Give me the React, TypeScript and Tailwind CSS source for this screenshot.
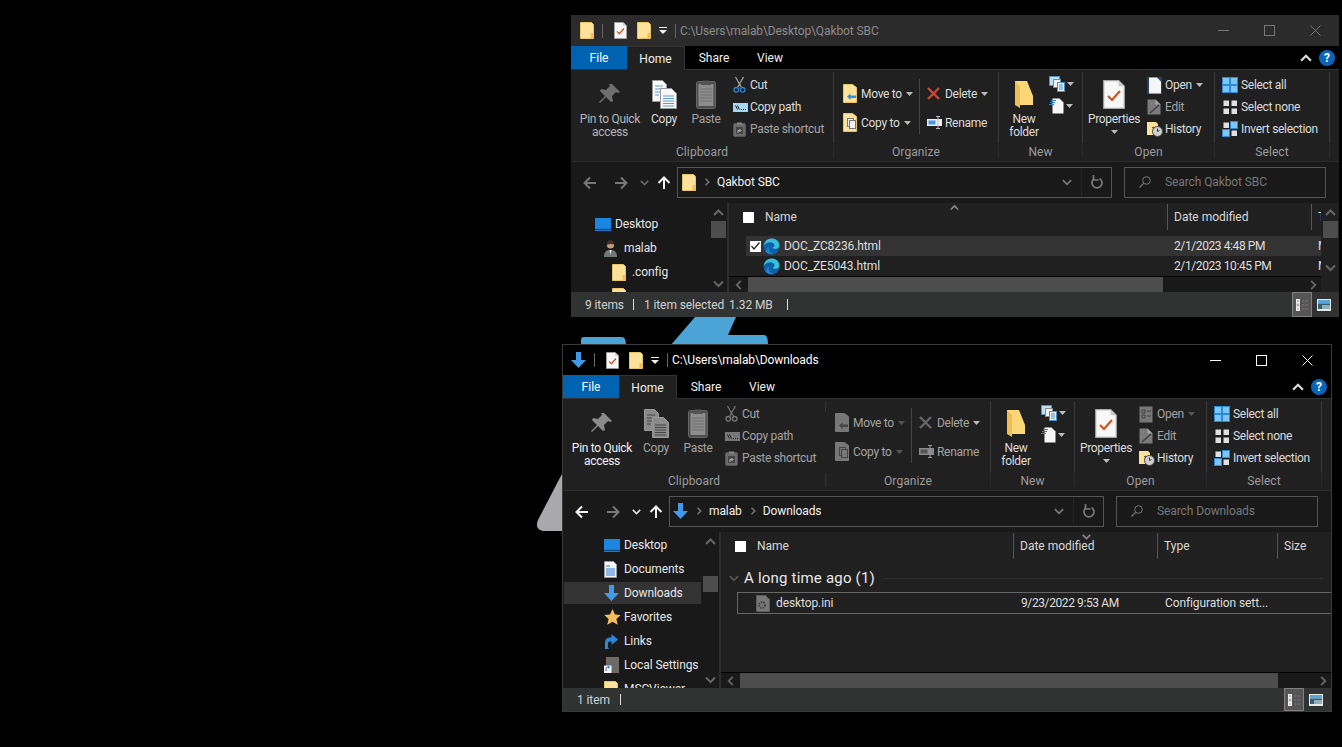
import type { ReactNode } from "react";

type IconProps = { dim?: boolean };

const Folder = ({ w = 14, h = 17 }: { w?: number; h?: number }) => (
  <svg width={w} height={h} viewBox="0 0 14 17" className="shrink-0">
    <path d="M.5.500h11l2 2v14H.5z" fill="#fce29a" stroke="#e9c468" />
    <path d="M10.500 11h3v5.500h-3z" fill="#f3bf52" />
  </svg>
);

const CheckDoc = ({ w = 13, h = 17 }: { w?: number; h?: number }) => (
  <svg width={w} height={h} viewBox="0 0 22 29" className="shrink-0">
    <path d="M.7.700h15l5.600 5.600v22H.7z" fill="#f7f7f7" stroke="#a8a8a8" strokeWidth="1.200" />
    <path d="M15.700.7v5.600h5.600z" fill="#c9c9c9" />
    <path d="M5 16l4 4 8-9" fill="none" stroke="#c8571d" strokeWidth="2.200" />
  </svg>
);

const DownArrow = ({ w = 15, h = 16 }: { w?: number; h?: number }) => (
  <svg width={w} height={h} viewBox="0 0 15 16" className="shrink-0">
    <path d="M5 0h5v8h5l-7.500 8L0 8h5z" fill="#3f9bea" />
  </svg>
);

const Edge = () => (
  <svg width="17" height="17" viewBox="0 0 17 17" className="shrink-0">
    <circle cx="8.500" cy="8.500" r="8" fill="#0f5fa8" />
    <path d="M.6 8C1.200 3.500 4.500.5 8.800.5c4.300 0 7.700 3 7.700 6.800 0 2.200-1.900 3.600-4 3.600-1.300 0-2.500-.5-3-1.200 1.300-.4 2-1.300 2-2.400 0-1.800-2-3.100-4.300-3.100C4.500 4.200 2 5.700.6 8z" fill="#35bfd8" />
    <path d="M6 8.500c-1 3 .8 6.500 4.500 7.500-3 .8-6-.3-7.700-2.500C3.500 11 4.500 9.500 6 8.500z" fill="#1b86d0" />
  </svg>
);

const Pin = ({ dim }: IconProps) => (
  <svg width="24" height="24" viewBox="0 0 24 24" className="shrink-0">
    <path d="M14 2l8 8-2 1-2-1-4 4 1 5-2 1-5-5-6 6-1-1 6-6-5-5 1-2 5 1 4-4-1-2z" fill={dim ? "#6f6f6f" : "#8a8a8a"} />
  </svg>
);

const CopyBig = ({ dim }: IconProps) => {
  const paper = dim ? "#8a8a8a" : "#f8f8f8";
  const line = dim ? "#444" : "#5a9bd5";
  return (
    <svg width="25" height="29" viewBox="0 0 25 29" className="shrink-0">
      <path d="M.5.500h10l4 4v17H.5z" fill={paper} stroke="#999" />
      <path d="M3 6h8M3 9h8M3 12h8M3 15h4" stroke={line} />
      <path d="M8.500 8.500h11l5 5v15h-16z" fill={paper} stroke="#999" />
      <path d="M11 16h11M11 18.500h11M11 21h11M11 23.500h11M11 26h11" stroke={line} />
    </svg>
  );
};

const Clipboard = () => (
  <svg width="20" height="30" viewBox="0 0 20 30" className="shrink-0">
    <rect x=".5" y="2.500" width="19" height="27" rx="2" fill="#4d4d4d" stroke="#666" />
    <rect x="2.500" y="5" width="15" height="22" fill="#8c8c8c" />
    <path d="M4 10h12M4 13h12M4 16h12M4 19h12M4 22h12" stroke="#707070" />
    <path d="M7 4V1.500h6V4h2v2H5V4z" fill="#555" />
  </svg>
);

const Scissors = ({ dim }: IconProps) => (
  <svg width="13" height="16" viewBox="0 0 13 16" className="shrink-0">
    <path d="M2.500 0l6 10.500M10.500 0l-6 10.500" stroke={dim ? "#777" : "#aaa"} strokeWidth="1.200" fill="none" />
    <circle cx="3.300" cy="12.800" r="2.300" fill="none" stroke={dim ? "#777" : "#2b7fd4"} strokeWidth="1.300" />
    <circle cx="9.700" cy="12.800" r="2.300" fill="none" stroke={dim ? "#777" : "#2b7fd4"} strokeWidth="1.300" />
  </svg>
);

const CopyPath = ({ dim }: IconProps) => (
  <svg width="15" height="9" viewBox="0 0 15 9" className="shrink-0">
    <rect width="15" height="9" fill={dim ? "#777" : "#a5d6f2"} />
    <path d="M2.500 2.500l2 4M4.500 2.500l2 4" stroke="#222" />
    <path d="M8 6.500h1M10 6.500h1M12 6.500h1" stroke="#222" />
  </svg>
);

const PasteShortcut = () => (
  <svg width="13" height="15" viewBox="0 0 13 15" className="shrink-0">
    <rect x=".5" y="1.500" width="12" height="13" rx="1.500" fill="#6c6c6c" stroke="#555" />
    <path d="M4 .5h5v2H4z" fill="#888" />
    <rect x="3" y="5" width="7" height="7" fill="#444" />
    <path d="M5 11V8.500h2.500M6.500 7l1.500 1.500L6.500 10" stroke="#bbb" fill="none" />
  </svg>
);

const FolderAction = ({ kind, dim }: { kind: "move" | "copy"; dim?: boolean }) => (
  <svg width="14" height="19" viewBox="0 0 14 19" className="shrink-0">
    <path d="M.5.500h9l4 3v15H.5z" fill={dim ? "#777" : "#fce29a"} stroke={dim ? "#777" : "#e9c468"} />
    {kind === "move" ? (
      <path d="M4 12.500l3.500-3v2H13v2.500H7.500v2z" fill={dim ? "#444" : "#2f8fe6"} />
    ) : (
      <>
        <rect x="4.500" y="5.500" width="6" height="8" fill={dim ? "#777" : "#f2f2f2"} stroke={dim ? "#444" : "#777"} />
        <rect x="6.500" y="7.500" width="6" height="8" fill={dim ? "#777" : "#f2f2f2"} stroke={dim ? "#444" : "#777"} />
      </>
    )}
  </svg>
);

const DeleteX = ({ dim }: IconProps) => (
  <svg width="13" height="13" viewBox="0 0 13 13" className="shrink-0">
    <path d="M1 1l11 11M12 1L1 12" stroke={dim ? "#666" : "#d8432a"} strokeWidth="2.400" />
  </svg>
);

const Rename = ({ dim }: IconProps) => (
  <svg width="16" height="13" viewBox="0 0 16 13" className="shrink-0">
    <rect y="3" width="15" height="7" fill={dim ? "#888" : "#eee"} />
    <rect x="1.500" y="4.500" width="7" height="4" fill={dim ? "#555" : "#3f9bea"} />
    <path d="M11 .5V12.500M9 .5h4M9 12.500h4" stroke={dim ? "#999" : "#bbb"} />
  </svg>
);

const NewFolder = () => (
  <svg width="18" height="27" viewBox="0 0 18 27" className="shrink-0">
    <path d="M0 0h12l6 15v9H5z" fill="#fbd875" />
    <path d="M0 0l5 5v22l-5-3z" fill="#efbd55" />
  </svg>
);

const NewItem = () => (
  <svg width="16" height="16" viewBox="0 0 16 16" className="shrink-0">
    <rect x=".5" y=".5" width="10" height="9" fill="#bfe0f5" stroke="#4b8fc4" />
    <rect x="4.500" y="3.500" width="7" height="8" fill="#f3f3f3" stroke="#888" />
    <rect x="8.500" y="6.500" width="7" height="9" fill="#e8f1f8" stroke="#4b8fc4" />
    <path d="M10 9h4M10 11h4M10 13h4" stroke="#4b8fc4" />
  </svg>
);

const EasyAccess = () => (
  <svg width="15" height="16" viewBox="0 0 15 16" className="shrink-0">
    <path d="M3.500.5h7l4 4v11h-11z" fill="#f7f7f7" />
    <path d="M2 2.500h5M1 4.500h5M0 6.500h5" stroke="#2b7fd4" strokeWidth="1.200" />
  </svg>
);

const OpenDoc = ({ dim }: IconProps) =>
  dim ? (
    <svg width="14" height="17" viewBox="0 0 14 17" className="shrink-0">
      <path d="M.5.500h13v16H.5z" fill="#777" />
      <path d="M3 4h3v3H3zM3 9h3v3H3zM8 5h4M8 10h4" stroke="#444" fill="none" />
    </svg>
  ) : (
    <svg width="15" height="17" viewBox="0 0 15 17" className="shrink-0">
      <rect width="15" height="17" fill="#24406f" />
      <path d="M2 .5h8l4 4V16.500H2z" fill="#f5f5f5" />
    </svg>
  );

const EditDoc = () => (
  <svg width="14" height="16" viewBox="0 0 14 16" className="shrink-0">
    <path d="M.5.500h8l5 5v10H.5z" fill="#7b7b7b" />
    <path d="M8.500.5v5h5z" fill="#a5a5a5" />
    <path d="M3 14L12 6" stroke="#3f3f3f" strokeWidth="1.500" />
  </svg>
);

const History = () => (
  <svg width="16" height="15" viewBox="0 0 16 15" className="shrink-0">
    <path d="M0 0h9l2 2v11H0z" fill="#fce29a" />
    <circle cx="10.500" cy="9.500" r="5" fill="#d0d0d0" stroke="#444" />
    <path d="M10.500 6.500v3l2-1M7 5l-2 1" stroke="#333" fill="none" />
  </svg>
);

const SelectIcon = ({ kind }: { kind: "all" | "none" | "invert" }) => {
  const blue = (x: number, y: number) => (
    <rect x={x + 0.5} y={y + 0.5} width="7" height="7" fill="#7cc5f4" stroke="#2b8ad6" />
  );
  const grey = (x: number, y: number) => <rect x={x + 1.5} y={y + 1.5} width="5.500" height="5.500" fill="#e0e0e0" />;
  const map = {
    all: [blue(0, 0), blue(8, 0), blue(0, 8), blue(8, 8)],
    none: [grey(0, 0), grey(8, 0), grey(0, 8), grey(8, 8)],
    invert: [grey(0, 0), blue(8, 0), blue(0, 8), grey(8, 8)],
  };
  return (
    <svg width="16" height="16" viewBox="0 0 16 16" className="shrink-0">
      {map[kind].map((node, i) => (
        <g key={i}>{node}</g>
      ))}
    </svg>
  );
};

const Caret = ({ color = "#bbb" }: { color?: string }) => (
  <svg width="7" height="4" viewBox="0 0 7 4" className="shrink-0">
    <path d="M0 0h7L3.500 4z" fill={color} />
  </svg>
);

const Chevron = ({ dir, color = "#666", size = 11 }: { dir: "up" | "down" | "left" | "right"; color?: string; size?: number }) => {
  const d = {
    up: "M1 8l4.500-4.500L10 8",
    down: "M1 3.500L5.500 8 10 3.500",
    left: "M7.500 1L3 5.500 7.500 10",
    right: "M3.500 1L8 5.500 3.500 10",
  }[dir];
  return (
    <svg width={size} height={size} viewBox="0 0 11 11" className="shrink-0">
      <path d={d} fill="none" stroke={color} strokeWidth="2" />
    </svg>
  );
};

const NavArrow = ({ dir, color }: { dir: "left" | "right" | "up"; color: string }) => {
  const d = {
    left: "M13 7H2M7 1.500L1.500 7 7 12.500",
    right: "M1 7h11M7 1.500L12.500 7 7 12.500",
    up: "M7 13V2M1.500 7L7 1.500 12.500 7",
  }[dir];
  return (
    <svg width="14" height="14" viewBox="0 0 14 14" className="shrink-0">
      <path d={d} fill="none" stroke={color} strokeWidth="2" />
    </svg>
  );
};

const Refresh = () => (
  <svg width="12" height="14" viewBox="0 0 12 14" className="shrink-0">
    <path d="M8.500 3.500A5 5 0 1 1 3 3.800" fill="none" stroke="#777" strokeWidth="1.700" />
    <path d="M2.500 0v5h5" fill="none" stroke="#777" strokeWidth="1.700" />
  </svg>
);

const SearchGlass = () => (
  <svg width="12" height="12" viewBox="0 0 12 12" className="shrink-0">
    <circle cx="7.500" cy="4.500" r="3.800" fill="none" stroke="#777" />
    <path d="M4.800 7.200L.5 11.500" stroke="#777" strokeWidth="1.200" />
  </svg>
);

const DesktopIcon = () => (
  <svg width="16" height="13" viewBox="0 0 16 13" className="shrink-0">
    <rect width="16" height="13" fill="#1b86e0" />
    <path d="M0 11.500h16" stroke="#0d4d8a" strokeWidth="1.500" />
  </svg>
);

const UserIcon = () => (
  <svg width="13" height="17" viewBox="0 0 13 17" className="shrink-0">
    <path d="M0 17c0-5 2-7 6.500-7S13 12 13 17z" fill="#6e7a7a" />
    <path d="M5.500 10l1 5 1-5z" fill="#eee" />
    <circle cx="6.500" cy="5" r="3.600" fill="#c59a7e" />
    <path d="M2.800 5C2.500 1.500 4.500 0 6.500 0s4 1.500 3.700 4.500C8.500 4 6 3.500 2.800 5z" fill="#3a3028" />
  </svg>
);

const DocumentsIcon = () => (
  <svg width="13" height="17" viewBox="0 0 13 17" className="shrink-0">
    <path d="M.5.500h9l3 3v13H.5z" fill="#f5f5f5" stroke="#999" />
    <path d="M2 5h4M2 8h9M2 10h9M2 12h9M2 14h9" stroke="#2b7fd4" />
  </svg>
);

const Star = () => (
  <svg width="17" height="16" viewBox="0 0 17 16" className="shrink-0">
    <path d="M8.500 0l2.500 5.500 5.700.6-4.300 3.900 1.300 5.800-5.200-3-5.200 3L4.600 10 .3 6.100 6 5.500z" fill="#f5be5e" />
  </svg>
);

const LinksIcon = () => (
  <svg width="14" height="16" viewBox="0 0 14 16" className="shrink-0">
    <path d="M1 16V9c0-3 2-4.500 5-4.500h1.500V1L14 6.500 7.500 12V8.500H6C4 8.500 4 10 4 12c0 2 0 3 1 4z" fill="#2b86dc" />
  </svg>
);

const LocalSettings = () => (
  <svg width="15" height="16" viewBox="0 0 15 16" className="shrink-0">
    <rect x="2" width="13" height="16" fill="#77685d" />
    <rect x="4" y="1.500" width="9" height="13" fill="#6a6a6a" />
    <rect y="8.500" width="7.500" height="7.500" fill="#f3f3f3" />
    <path d="M2 14v-2.500c0-1 1-1.500 2-1.500h1M3.800 8.800L5.500 10 3.800 11.500" stroke="#1d6fc0" fill="none" />
  </svg>
);

const IniFile = () => (
  <svg width="14" height="17" viewBox="0 0 14 17" className="shrink-0">
    <path d="M.5.500h9l4 4v12H.5z" fill="#777" stroke="#5c5c5c" />
    <circle cx="6" cy="10" r="3" fill="none" stroke="#444" strokeWidth="2" strokeDasharray="1.500 1" />
  </svg>
);

const DetailsIcon = () => (
  <svg width="12" height="12" viewBox="0 0 12 12">
    <path d="M0 0h4v4H0z" fill="#eee" />
    <path d="M0 4h4v4H0z" fill="#ddd" />
    <path d="M0 8h4v4H0z" fill="#eee" />
    <path d="M1.500 1.500h1v1h-1zM1.500 5.500h1v1h-1z" fill="#222" />
    <path d="M1.500 9.500h1v1h-1z" fill="#c33" />
    <path d="M6 2h2.500M9.500 2H12M6 6h2.500M9.500 6H12M6 10h2.500M9.500 10H12" stroke="#777" />
  </svg>
);

const ThumbIcon = () => (
  <svg width="14" height="12" viewBox="0 0 14 12">
    <rect width="14" height="12" fill="#e8e8e8" />
    <rect x="1" y="1" width="12" height="3.500" fill="#5aa4dc" />
    <rect x="1" y="4.500" width="12" height="5.500" fill="#39606f" />
    <path d="M5 6h8v4H5z" fill="#8fb0b8" />
  </svg>
);

const Dropdown = ({ dim }: IconProps) => (
  <svg width="8" height="7" viewBox="0 0 8 7" className="shrink-0">
    <path d="M0 .5h8" stroke={dim ? "#ccc" : "#eee"} />
    <path d="M0 3h8L4 7z" fill={dim ? "#ccc" : "#eee"} />
  </svg>
);

const SmallRow = ({ icon, label, width, dim, caret, caretColor }: {
  icon: ReactNode;
  label: string;
  width: string;
  dim?: boolean;
  caret?: boolean;
  caretColor?: string;
}) => (
  <div className="flex items-center">
    <div className={`flex shrink-0 items-center ${width}`}>{icon}</div>
    <span className={`whitespace-nowrap ${dim ? "text-[#a3a3a3]" : "text-[#dcdcdc]"}`}>{label}</span>
    {caret && (
      <span className="ml-[4px]">
        <Caret color={caretColor} />
      </span>
    )}
  </div>
);

const BigButton = ({ icon, width, margin, lines, tone, caret }: {
  icon: ReactNode;
  width: string;
  margin?: string;
  lines: string[];
  tone: string;
  caret?: boolean;
}) => (
  <div className={`flex shrink-0 flex-col items-center pt-2 ${width} ${margin ?? ""}`}>
    <div className="flex h-8 items-center justify-center">{icon}</div>
    <div className={`mt-[3px] text-center leading-[13px] whitespace-nowrap ${tone}`}>
      {lines.map((line) => (
        <div key={line}>{line}</div>
      ))}
    </div>
    {caret && (
      <div className="mt-[4px]">
        <Caret />
      </div>
    )}
  </div>
);

const Group = ({ width, label, broken, children }: { width: string; label: string; broken?: boolean; children: ReactNode }) => (
  <div className={`flex h-full shrink-0 ${width}`}>
    <div className="flex min-w-0 flex-1 flex-col">
      <div className="flex flex-1">{children}</div>
      <div className="flex h-[21px] items-center justify-center pt-[3px] tracking-[0.1px] text-[#9c9c9c]">{label}</div>
    </div>
    <div className="mt-0.5 mb-[3px] flex w-px flex-col justify-between">
      {broken ? (
        <>
          <div className="h-[11px] bg-[#333]" />
          <div className="h-[14px] bg-[#333]" />
        </>
      ) : (
        <>
          <div className="h-[71px] bg-[#3b3b3b]" />
          <div className="h-[15px] bg-[#2a2a2a]" />
        </>
      )}
    </div>
  </div>
);

const Ribbon = ({ active }: { active: boolean }) => {
  const dim = active;
  return (
    <div className="flex h-[92px] shrink-0 border-b border-[#2c2c2c] bg-[#202020] tracking-[-0.3px]">
      <Group width="w-[263px]" label="Clipboard" broken={active}>
        <BigButton icon={<Pin dim={!active} />} width="w-[64px]" margin="ml-[7px]" lines={["Pin to Quick", "access"]} tone={active ? "text-[#f0f0f0]" : "text-[#b5b5b5]"} />
        <BigButton icon={<CopyBig dim={dim} />} width="w-[44px]" lines={["Copy"]} tone={dim ? "text-[#a3a3a3]" : "text-[#dcdcdc]"} />
        <BigButton icon={<Clipboard />} width="w-[40px]" lines={["Paste"]} tone="text-[#a3a3a3]" />
        <div className="ml-[7px] flex flex-col pt-1 [&>*]:h-[22px]">
          <SmallRow icon={<Scissors dim={dim} />} label="Cut" width="w-[17px]" dim={dim} />
          <SmallRow icon={<CopyPath dim={dim} />} label="Copy path" width="w-[17px]" dim={dim} />
          <SmallRow icon={<PasteShortcut />} label="Paste shortcut" width="w-[17px]" dim />
        </div>
      </Group>
      <Group width="w-[165px]" label="Organize">
        <div className="ml-[9px] flex w-[76px] flex-col pt-[9px] [&>*]:h-[29px]">
          <SmallRow icon={<FolderAction kind="move" dim={dim} />} label="Move to" width="w-[18px]" dim={dim} caret caretColor={dim ? "#555" : "#bbb"} />
          <SmallRow icon={<FolderAction kind="copy" dim={dim} />} label="Copy to" width="w-[18px]" dim={dim} caret caretColor={dim ? "#555" : "#bbb"} />
        </div>
        <div className="mt-[9px] h-[55px] w-px bg-[#444]" />
        <div className="ml-[7px] flex flex-col pt-[9px] [&>*]:h-[29px]">
          <SmallRow icon={<DeleteX dim={dim} />} label="Delete" width="w-[18px]" dim={dim} caret />
          <SmallRow icon={<Rename dim={dim} />} label="Rename" width="w-[18px]" dim={dim} />
        </div>
      </Group>
      <Group width="w-[84px]" label="New">
        <BigButton icon={<NewFolder />} width="w-[46px]" margin="ml-[2px]" lines={["New", "folder"]} tone="text-[#dcdcdc]" />
        <div className="ml-[2px] flex flex-col pt-[3px] [&>*]:h-[22px]">
          <div className="flex items-center gap-[2px]">
            <NewItem />
            <Caret />
          </div>
          <div className="flex items-center gap-[2px]">
            <EasyAccess />
            <Caret />
          </div>
        </div>
      </Group>
      <Group width="w-[132px]" label="Open">
        <BigButton icon={<CheckDoc w={22} h={29} />} width="w-[60px]" margin="ml-px" lines={["Properties"]} tone="text-[#dcdcdc]" caret />
        <div className="ml-[3px] flex flex-col pt-1 [&>*]:h-[22px]">
          <SmallRow icon={<OpenDoc dim={dim} />} label="Open" width="w-[18px]" dim={dim} caret caretColor={dim ? "#555" : "#bbb"} />
          <SmallRow icon={<EditDoc />} label="Edit" width="w-[18px]" dim />
          <SmallRow icon={<History />} label="History" width="w-[18px]" />
        </div>
      </Group>
      <Group width="w-[115px]" label="Select">
        <div className="ml-[7px] flex flex-col pt-1 [&>*]:h-[22px]">
          <SmallRow icon={<SelectIcon kind="all" />} label="Select all" width="w-[19px]" />
          <SmallRow icon={<SelectIcon kind="none" />} label="Select none" width="w-[19px]" />
          <SmallRow icon={<SelectIcon kind="invert" />} label="Invert selection" width="w-[19px]" />
        </div>
      </Group>
    </div>
  );
};

const TitleSep = () => <div className="h-[14px] w-px bg-[#666]" />;

const TitleBar = ({ active, path, height }: { active: boolean; path: string; height: string }) => {
  const control = active ? "#fff" : "#777";
  return (
    <div className={`flex shrink-0 items-center ${height} ${active ? "bg-black" : "bg-[#2b2b2b]"}`}>
      <div className="flex w-[31px] justify-end pr-[8px]">
        {active ? <DownArrow /> : <Folder />}
      </div>
      <TitleSep />
      <div className="ml-[11px]">
        <CheckDoc />
      </div>
      <div className="ml-[10px]">
        <Folder />
      </div>
      <div className="ml-2">
        <Dropdown />
      </div>
      <div className="ml-2">
        <TitleSep />
      </div>
      <div className={`ml-[4px] whitespace-nowrap ${active ? "text-white" : "text-[#8c8c8c]"}`}>{path}</div>
      <div className="ml-auto flex items-center pr-[18px]">
        <svg width="11" height="1" viewBox="0 0 11 1" className="mr-[35px]">
          <rect width="11" height="1" fill={control} />
        </svg>
        <svg width="11" height="11" viewBox="0 0 11 11" className="mr-[35px]">
          <rect x=".5" y=".5" width="10" height="10" fill="none" stroke={control} />
        </svg>
        <svg width="11" height="11" viewBox="0 0 11 11">
          <path d="M.5.500l10 10M10.500.5l-10 10" stroke={control} />
        </svg>
      </div>
    </div>
  );
};

const Tabs = () => (
  <div className="flex h-6 shrink-0 items-stretch border-b border-[#333] bg-black tracking-normal text-[#f0f0f0]">
    <div className="flex w-[56px] items-center justify-center bg-[#0063b1] text-white">File</div>
    <div className="-mb-px flex w-[58px] items-center justify-center border-t border-r border-[#333] bg-[#202020]">Home</div>
    <div className="flex w-[58px] items-center justify-center">Share</div>
    <div className="flex w-[54px] items-center justify-center">View</div>
    <div className="ml-auto flex items-center pr-[4px]">
      <Chevron dir="up" color="#ddd" size={12} />
      <div className="ml-[7px] flex h-[16px] w-[16px] items-center justify-center rounded-full bg-[#0a64b8] text-[12px] leading-none font-bold text-white">?</div>
    </div>
  </div>
);

const NavBar = ({ active, crumbs, search }: { active: boolean; crumbs: string[]; search: string }) => (
  <div className="h-[41px] shrink-0 bg-[#191919] pt-[5px] pr-[13px] pl-[12px]">
    <div className="flex h-[31px] items-center">
      <NavArrow dir="left" color={active ? "#f2f2f2" : "#777"} />
      <div className="ml-[17px]">
        <NavArrow dir="right" color="#777" />
      </div>
      <div className="ml-[12px]">
        <Chevron dir="down" color={active ? "#ddd" : "#666"} size={9} />
      </div>
      <div className="ml-[8px]">
        <NavArrow dir="up" color="#f2f2f2" />
      </div>
      <div className={`ml-[6px] flex h-full w-[435px] items-center border border-[#555] pb-px ${active ? "pl-[3px]" : "pl-[4px]"}`}>
        {active ? <DownArrow /> : <Folder />}
        {crumbs.map((crumb) => (
          <div key={crumb} className="flex items-center">
            <span className="mr-[6px] ml-[7px]">
              <Chevron dir="right" color="#777" size={8} />
            </span>
            <span className="whitespace-nowrap text-[#f0f0f0]">{crumb}</span>
          </div>
        ))}
        <div className="ml-auto flex h-full items-center">
          <Chevron dir="down" color="#777" size={10} />
          <div className="ml-[9px] h-full w-px bg-[#262626]" />
          <div className="flex w-[29px] justify-center">
            <Refresh />
          </div>
        </div>
      </div>
      <div className="ml-[12px] flex h-full flex-1 items-center border border-[#555] pb-px pl-[14px] text-[#777]">
        <SearchGlass />
        <span className="ml-[14px] whitespace-nowrap">{search}</span>
      </div>
    </div>
  </div>
);

type TreeItem = { icon: ReactNode; label: string; indent: string; selected?: boolean };

const Sidebar = ({ items, padTop, thumb }: { items: TreeItem[]; padTop: string; thumb: string }) => (
  <div className="flex w-[158px] shrink-0 border-r-2 border-[#2e2e2e] bg-[#191919]">
    <div className={`w-[139px] shrink-0 overflow-hidden ${padTop}`}>
      {items.map((item) => (
        <div key={item.label} className="flex h-6 items-center">
          <div className={`ml-px flex h-[22px] w-[137px] shrink-0 items-center whitespace-nowrap text-[#e6e6e6] ${item.indent} ${item.selected ? "bg-[#333]" : ""}`}>
            <div className="flex w-5 shrink-0 items-center">{item.icon}</div>
            {item.label}
          </div>
        </div>
      ))}
    </div>
    <div className="ml-px flex w-[15px] shrink-0 flex-col items-center">
      <div className="flex h-[18px] items-center">
        <Chevron dir="up" />
      </div>
      <div className={`w-[15px] bg-[#4d4d4d] ${thumb}`} />
      <div className="mt-auto flex h-[18px] items-center">
        <Chevron dir="down" />
      </div>
    </div>
  </div>
);

const HScroll = ({ thumb, width }: { thumb: string; width: string }) => (
  <div className={`flex h-4 shrink-0 items-stretch border-t border-black bg-[#191919] ${width}`}>
    <div className="flex w-[19px] items-center justify-center">
      <Chevron dir="left" size={10} />
    </div>
    <div className={`bg-[#4d4d4d] ${thumb}`} />
    <div className="ml-auto flex w-4 items-center justify-center">
      <Chevron dir="right" size={10} />
    </div>
  </div>
);

const HeaderCell = ({ label, width }: { label: string; width: string }) => (
  <div className={`my-px flex shrink-0 items-center overflow-hidden border-l border-[#555] pl-[6px] tracking-normal whitespace-nowrap text-[#d8d8d8] ${width}`}>{label}</div>
);

const StatusBar = ({ height, items }: { height: string; items: ReactNode }) => (
  <div className={`flex shrink-0 items-center bg-[#313333] pl-[14px] text-[#d0d0d0] ${height}`}>
    {items}
    <div className="mr-[8px] ml-auto flex h-full items-center">
      <div className="flex h-full w-[20px] items-center justify-center border border-[#808080] bg-[#555]">
        <DetailsIcon />
      </div>
      <div className="ml-[5px]">
        <ThumbIcon />
      </div>
    </div>
  </div>
);

const StatusSep = ({ margin }: { margin: string }) => <div className={`h-[11px] w-px bg-[#ddd] ${margin}`} />;

const QakbotContent = () => (
  <div className="flex min-h-0 flex-1">
    <Sidebar
      padTop="pt-[9px]"
      thumb="h-[17px]"
      items={[
        { icon: <DesktopIcon />, label: "Desktop", indent: "pl-[23px]" },
        { icon: <UserIcon />, label: "malab", indent: "pl-[32px]" },
        { icon: <Folder />, label: ".config", indent: "pl-[40px]" },
        { icon: <Folder />, label: "", indent: "pl-[40px]" },
      ]}
    />
    <div className="flex min-w-0 flex-1 flex-col bg-[#202020]">
      <div className="flex min-h-0 flex-1">
        <div className="relative min-w-0 flex-1 overflow-hidden">
          <div className="flex h-7 items-stretch">
            <div className="flex w-[438px] shrink-0 items-center pl-[14px] tracking-normal text-[#d8d8d8]">
              <div className="h-[11px] w-[11px] bg-white" />
              <span className="ml-[11px]">Name</span>
            </div>
            <HeaderCell label="Date modified" width="w-[144px]" />
            <HeaderCell label="T" width="w-[10px]" />
          </div>
          <div className="absolute top-0 left-[221px]">
            <Chevron dir="up" size={9} color="#888" />
          </div>
          <div className="mt-[5px] ml-[17px]">
            {[
              { name: "DOC_ZC8236.html", date: "2/1/2023 4:48 PM", on: true },
              { name: "DOC_ZE5043.html", date: "2/1/2023 10:45 PM", on: false },
            ].map((row) => (
              <div key={row.name} className={`flex h-5 items-center whitespace-nowrap text-[#dedede] ${row.on ? "bg-[#333]" : ""}`}>
                <div className="flex w-[421px] shrink-0 items-center pl-1">
                  <div className={`flex h-[11px] w-[11px] items-center justify-center ${row.on ? "bg-white" : ""}`}>
                    {row.on && (
                      <svg width="9" height="8" viewBox="0 0 9 8">
                        <path d="M.5 4l2.500 3L8.500.5" fill="none" stroke="#222" strokeWidth="1.200" />
                      </svg>
                    )}
                  </div>
                  <div className="ml-[2px]">
                    <Edge />
                  </div>
                  <span className="ml-[4px]">{row.name}</span>
                </div>
                <div className="w-[144px] shrink-0 pl-[7px] tracking-[-0.4px]">{row.date}</div>
                <div className="w-[10px] shrink-0 overflow-hidden pl-[7px]">M</div>
              </div>
            ))}
          </div>
        </div>
        <div className="flex w-[18px] shrink-0 flex-col items-center pl-px">
          <div className="flex h-[18px] items-center">
            <Chevron dir="up" />
          </div>
          <div className="h-[17px] w-[15px] bg-[#4d4d4d]" />
          <div className="mt-auto flex h-[18px] items-center">
            <Chevron dir="down" />
          </div>
        </div>
      </div>
      <HScroll thumb="w-[415px]" width="w-[592px]" />
    </div>
  </div>
);

const DownloadsContent = () => (
  <div className="flex min-h-0 flex-1">
    <Sidebar
      padTop="pt-px"
      thumb="mt-[26px] h-4"
      items={[
        { icon: <DesktopIcon />, label: "Desktop", indent: "pl-10" },
        { icon: <DocumentsIcon />, label: "Documents", indent: "pl-10" },
        { icon: <DownArrow />, label: "Downloads", indent: "pl-10", selected: true },
        { icon: <Star />, label: "Favorites", indent: "pl-10" },
        { icon: <LinksIcon />, label: "Links", indent: "pl-10" },
        { icon: <LocalSettings />, label: "Local Settings", indent: "pl-10" },
        { icon: <Folder />, label: "MSCViewer", indent: "pl-10" },
      ]}
    />
    <div className="flex min-w-0 flex-1 flex-col bg-[#202020]">
      <div className="relative min-h-0 flex-1 overflow-hidden">
        <div className="flex h-7 items-stretch">
          <div className="flex w-[292px] shrink-0 items-center pl-[14px] tracking-normal text-[#d8d8d8]">
            <div className="h-[11px] w-[11px] bg-white" />
            <span className="ml-[11px]">Name</span>
          </div>
          <HeaderCell label="Date modified" width="w-[144px]" />
          <HeaderCell label="Type" width="w-[120px]" />
          <HeaderCell label="Size" width="w-[54px]" />
        </div>
        <div className="absolute top-0 left-[361px]">
          <Chevron dir="down" size={9} color="#888" />
        </div>
        <div className="mt-[7px] flex h-[22px] items-center pr-2 pl-2">
          <Chevron dir="down" size={10} color="#555" />
          <span className="ml-[5px] text-[15px] tracking-[0.2px] whitespace-nowrap text-[#e8e8e8]">A long time ago (1)</span>
          <div className="ml-2 h-px flex-1 bg-[#2e2e2e]" />
        </div>
        <div className="mt-[3px] ml-4 flex h-[22px] items-center whitespace-nowrap border-y border-l border-[#666] text-[#dedede]">
          <div className="flex w-[276px] shrink-0 items-center pl-[18px]">
            <IniFile />
            <span className="ml-[6px]">desktop.ini</span>
          </div>
          <div className="w-[144px] shrink-0 pl-[7px] tracking-[-0.4px]">9/23/2022 9:53 AM</div>
          <div className="pl-[7px]">Configuration sett...</div>
        </div>
      </div>
      <HScroll thumb="w-[538px]" width="w-full" />
    </div>
  </div>
);

const Explorer = ({ active, path, crumbs, search, position, titleHeight, statusHeight, status, content }: {
  active: boolean;
  path: string;
  crumbs: string[];
  search: string;
  position: string;
  titleHeight: string;
  statusHeight: string;
  status: ReactNode;
  content: ReactNode;
}) => (
  <div className={`absolute flex w-[768px] flex-col overflow-hidden ${position} ${active ? "ring-1 ring-[#3a3a3a]" : ""}`}>
    <TitleBar active={active} path={path} height={titleHeight} />
    <Tabs />
    <Ribbon active={active} />
    <NavBar active={active} crumbs={crumbs} search={search} />
    {content}
    <StatusBar height={statusHeight} items={status} />
  </div>
);

export default function App() {
  return (
    <div className="relative h-[747px] w-[1342px] overflow-hidden bg-black font-['Roboto',sans-serif] text-[12px] tracking-[-0.1px]">
      <svg width="300" height="230" viewBox="530 310 300 230" className="absolute top-[310px] left-[530px]">
        <path d="M581 346v-6q0-3 3-3h38q4 0 4 9z" fill="#4ba3d6" />
        <path d="M670 346L695 317h41l-8 18h36q4 0 4 9v2z" fill="#4ba3d6" />
        <path d="M564 470L538 520q-3 7 2 10l3 1h21z" fill="#a9a9ad" />
      </svg>
      <Explorer
        active={false}
        path="C:\Users\malab\Desktop\Qakbot SBC"
        crumbs={["Qakbot SBC"]}
        search="Search Qakbot SBC"
        position="top-[15px] left-[571px] h-[302px]"
        titleHeight="h-[31px]"
        statusHeight="h-[25px]"
        content={<QakbotContent />}
        status={
          <>
            <span>9 items</span>
            <StatusSep margin="ml-[9px]" />
            <span className="ml-[10px]">1 item selected</span>
            <span className="ml-[5px]">1.32 MB</span>
            <StatusSep margin="ml-[14px]" />
          </>
        }
      />
      <Explorer
        active
        path="C:\Users\malab\Downloads"
        crumbs={["malab", "Downloads"]}
        search="Search Downloads"
        position="top-[345px] left-[563px] h-[366px]"
        titleHeight="h-[30px]"
        statusHeight="h-[23px]"
        content={<DownloadsContent />}
        status={
          <>
            <span>1 item</span>
            <StatusSep margin="ml-[10px]" />
          </>
        }
      />
    </div>
  );
}
